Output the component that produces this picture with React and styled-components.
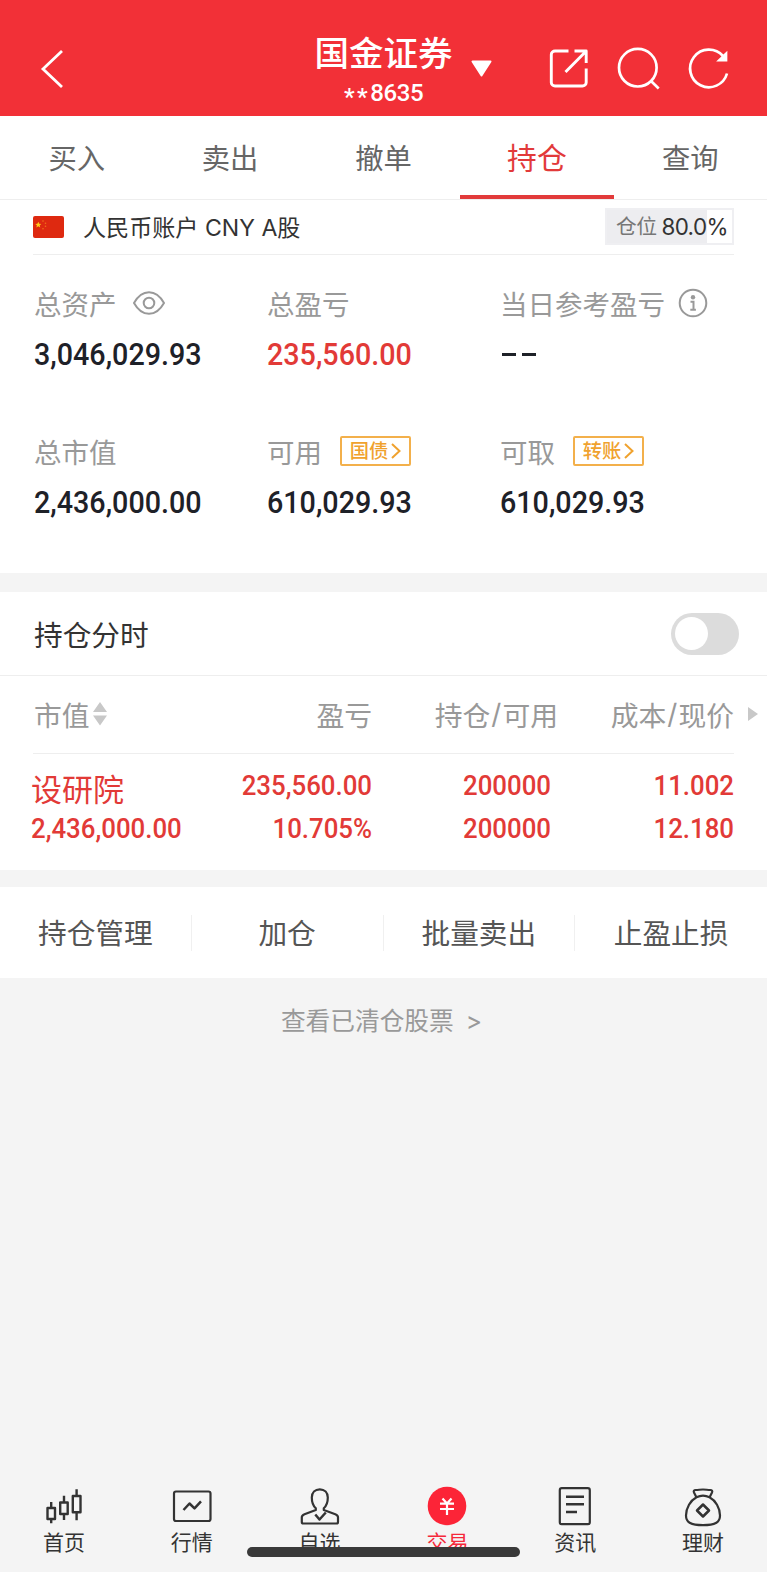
import { useState } from 'react';
import styled, { createGlobalStyle } from 'styled-components';

const GlobalStyle = createGlobalStyle`
  * {
    box-sizing: border-box;
  }
  body {
    margin: 0;
    background: #fff;
    font-family: Inter, 'Noto Sans CJK SC', sans-serif;
    color: #333;
  }
  svg {
    display: block;
    flex: none;
  }
`;

const Container = styled.div`
  position: relative;
  width: 767px;
  height: 1572px;
  display: flex;
  flex-direction: column;
  background: #f4f4f4;
  overflow: hidden;
  white-space: nowrap;
`;

const Header = styled.header`
  height: 116px;
  display: grid;
  grid-template-columns: 1fr auto 1fr;
  background: #f23037;
  color: #fff;
`;

const BackButton = styled.div`
  padding: 48px 0 0 38px;
`;

const TitleWrapper = styled.div`
  padding-top: 33px;
  text-align: center;
`;

const Title = styled.div`
  height: 42px;
  line-height: 42px;
  font-size: 34.5px;
  font-weight: 500;
`;

const AccountNo = styled.div`
  height: 34px;
  line-height: 37px;
  font-family: Roboto, sans-serif;
  font-size: 24px;
  font-weight: 500;
  letter-spacing: -0.4px;
`;

const Stars = styled.span`
  vertical-align: -4px;
  letter-spacing: 2.5px;
`;

const HeaderIcons = styled.div`
  display: flex;
  padding: 45px 0 0 17px;
`;

const IconGroup = styled.div`
  display: flex;
  gap: 22px;
  margin-left: 53px;
`;

const Caret = styled.div`
  margin-top: 15px;
`;

const Tabs = styled.nav`
  height: 84px;
  display: grid;
  grid-template-columns: repeat(5, 1fr);
  background: #fff;
  border-bottom: 1px solid #eee;
`;

const Tab = styled.div`
  height: 83px;
  padding-top: ${({ $active }) => ($active ? 0 : 1)}px;
  text-align: center;
  line-height: 84px;
  font-size: ${({ $active }) => ($active ? 29.8 : 28.3)}px;
  color: ${({ $active }) => ($active ? '#e23a3a' : '#666')};
  border-bottom: ${({ $active }) => ($active ? '4px solid #e23a3a' : 'none')};
`;

const AccountRow = styled.div`
  height: 55px;
  padding: 0 33px;
  background: #fff;
`;

const AccountInner = styled.div`
  height: 55px;
  display: flex;
  align-items: center;
  border-bottom: 1px solid #eee;
`;

const AccountName = styled.div`
  flex: 1;
  margin-left: 19px;
  padding-top: 1px;
  font-size: 23.1px;
  line-height: 32px;
`;

const PositionTag = styled.div`
  width: 129px;
  height: 37px;
  display: flex;
  align-items: center;
  padding-left: 9px;
  gap: 5px;
  margin-top: -1px;
  border: 2px solid #efeff2;
  background: linear-gradient(90deg, #ededf0 80%, #fff 80%);
  font-size: 22.4px;
  letter-spacing: -0.6px;
  line-height: 33px;
`;

const PositionLabel = styled.span`
  font-size: 20.8px;
  color: #777;
`;

const Stats = styled.section`
  height: 318px;
  padding: 29px 0 0 34px;
  display: grid;
  grid-template-columns: 233px 233px 1fr;
  grid-auto-rows: 148px;
  background: #fff;
`;

const StatLabel = styled.div`
  height: 38px;
  display: flex;
  align-items: center;
  gap: ${({ $gap }) => $gap || 16}px;
  font-size: 27.5px;
  color: #999;
`;

const Num = styled.div`
  line-height: ${({ $line }) => $line || 43}px;
  font-family: Roboto, sans-serif;
  font-size: ${({ $size }) => $size || 28}px;
  font-weight: 500;
  color: ${({ $up }) => ($up ? '#e23a37' : '#1e2128')};
  transform: scaleX(${({ $size }) => ($size ? 0.911 : 0.922)});
  transform-origin: ${({ $right }) => ($right ? 'right' : 'left')} center;
`;

const Dashes = styled.div`
  display: flex;
  gap: 6px;
  padding: 31px 0 0 2px;
  &::before,
  &::after {
    content: '';
    width: 14px;
    height: 3px;
    background: #1e2128;
  }
`;

const Tag = styled.span`
  width: 71px;
  height: 30px;
  display: flex;
  align-items: center;
  justify-content: center;
  gap: 3px;
  margin-left: 2px;
  border: 2px solid #f3b04b;
  border-radius: 2px;
  font-size: 19.3px;
  font-weight: 500;
  line-height: 26px;
  color: #f0a22e;
`;

const Band = styled.div`
  height: ${({ $height }) => $height}px;
`;

const SwitchRow = styled.div`
  height: 84px;
  padding: 0 28px 0 34px;
  display: flex;
  align-items: center;
  justify-content: space-between;
  background: #fff;
  border-bottom: 1px solid #eee;
  font-size: 28.7px;
`;

const Switch = styled.button`
  width: 68px;
  height: 42px;
  padding: 4px;
  display: flex;
  justify-content: ${({ $on }) => ($on ? 'flex-end' : 'flex-start')};
  border: none;
  border-radius: 21px;
  background: ${({ $on }) => ($on ? '#e23a3a' : '#dcdcdc')};
`;

const Knob = styled.span`
  width: 33px;
  height: 33px;
  border-radius: 50%;
  background: #fff;
`;

const TableHead = styled.div`
  height: 78px;
  padding-bottom: 2px;
  margin: 0 33px;
  display: grid;
  grid-template-columns: 139px 200px 186px 1fr;
  align-items: center;
  border-bottom: 1px solid #eee;
  font-size: 27.8px;
  color: #999;
`;

const HeadCell = styled.div`
  display: flex;
  align-items: center;
  justify-content: ${({ $left }) => ($left ? 'flex-start' : 'flex-end')};
  gap: ${({ $left }) => ($left ? 3 : 0)}px;
  padding-left: ${({ $left }) => ($left ? 1 : 0)}px;
`;

const Slash = styled.span`
  padding: 0 1px;
`;

// sits in the page gutter, right of the last column
const MoreArrow = styled.span`
  margin: 0 -24px 0 14px;
`;

const Table = styled.section`
  background: #fff;
`;

const Holding = styled.div`
  height: 116px;
  padding: 10px 33px 0 31px;
  display: grid;
  grid-template-columns: 180px 161px 179px 1fr;
`;

const HoldingCell = styled.div`
  text-align: ${({ $left }) => ($left ? 'left' : 'right')};
`;

const StockName = styled.div`
  height: 43px;
  line-height: 52px;
  font-size: 31px;
  color: #e23a37;
`;

const Actions = styled.div`
  height: 91px;
  display: grid;
  grid-template-columns: repeat(4, 1fr);
  align-items: center;
  background: #fff;
`;

const Action = styled.div`
  height: 36px;
  line-height: 38px;
  text-align: center;
  font-size: 28.7px;
  color: #555;
  border-right: 1px solid #f0f0f0;
  &:last-child {
    border-right: none;
  }
`;

const ClearedLink = styled.div`
  flex: 1;
  padding: 26px 4px 0 0;
  display: flex;
  justify-content: center;
  gap: 12px;
  line-height: 34px;
  font-size: 24.7px;
  color: #999;
`;

const BottomNav = styled.nav`
  height: 87px;
  display: grid;
  grid-template-columns: repeat(6, 1fr);
`;

const NavItem = styled.div`
  display: flex;
  flex-direction: column;
  align-items: center;
  line-height: 27px;
  font-size: 21px;
  color: ${({ $active }) => ($active ? '#f5283a' : '#333')};
`;

const HomeIndicator = styled.div`
  position: absolute;
  left: 247px;
  bottom: 15px;
  width: 273px;
  height: 10px;
  border-radius: 5px;
  background: #393939;
`;

const Line = ({ size = 44, width = 2.2, children }) => (
  <svg
    width={size}
    height={size}
    viewBox={`0 0 ${size} ${size}`}
    fill="none"
    stroke="currentColor"
    strokeWidth={width}
    strokeLinejoin="round"
  >
    {children}
  </svg>
);

const Flag = () => (
  <svg width="31" height="22" viewBox="0 0 31 22">
    <rect width="31" height="22" rx="2" fill="#de2910" />
    <path
      d="M5.3 5.8l.9 2 2.1.1-1.6 1.4.5 2.1-1.9-1.200-1.900 1.200.5-2.100-1.600-1.400 2.100-.1z"
      fill="#ffca1a"
    />
    <g fill="#f0701a">
      <circle cx="10" cy="5" r=".8" />
      <circle cx="12.500" cy="7.300" r=".8" />
      <circle cx="12.500" cy="10.300" r=".8" />
      <circle cx="10" cy="12.700" r=".8" />
    </g>
  </svg>
);

const Eye = () => (
  <svg width="32" height="24" viewBox="0 0 32 24" fill="none" stroke="#999" strokeWidth="2">
    <path d="M1 12C5 4.800 10 1.200 16 1.200S27 4.800 31 12C27 19.200 22 22.800 16 22.800S5 19.200 1 12z" />
    <circle cx="16" cy="12" r="5.300" />
  </svg>
);

const Info = () => (
  <svg width="30" height="30" viewBox="0 0 30 30" fill="none" stroke="#999" strokeWidth="2">
    <circle cx="15" cy="15" r="13.300" />
    <circle cx="15" cy="9.300" r="2.200" fill="#999" stroke="none" />
    <path d="M12.500 13.800h3v7.500M12.300 21.700h5.600" />
  </svg>
);

const TagArrow = () => (
  <svg width="10" height="16" viewBox="0 0 10 16" fill="none" stroke="currentColor" strokeWidth="2">
    <path d="M1 1l7.500 7L1 15" />
  </svg>
);

const navList = [
  {
    text: '首页',
    icon: (
      <Line width={2.4}>
        <path d="M5.500 23h7.500v11H5.500zM9.200 17v6M9.200 34v4.300M18.200 17.500h7.500v11.500h-7.500zM22 10.800v6.700M22 29v6M30.800 11h7.700v16.300h-7.700zM34.600 4.300V11M34.600 27.300v8" />
      </Line>
    ),
  },
  {
    text: '行情',
    icon: (
      <Line>
        <rect x="4" y="6.500" width="36.500" height="29.500" rx="2" />
        <path d="M13.500 25l6-6.500 5 4.800 6.500-7" strokeWidth="2.500" />
      </Line>
    ),
  },
  {
    text: '自选',
    icon: (
      <Line>
        <path d="M17.800 23.300C14.800 20.500 13.800 17 13.800 12.500c0-5 3.300-8.200 8-8.200s8 3.200 8 8.200c0 4.500-1 8-4 10.800v1.700l11.500 4.200c1.800.7 2.700 1.300 2.700 3v4.800c0 1-.5 1.500-1.500 1.500h-33.200c-1 0-1.500-.5-1.500-1.500v-4.800c0-1.700.9-2.300 2.700-3l11.300-4.200z" />
        <path d="M17.300 29.500l4.200 5 6.300-7" strokeWidth="2.500" />
      </Line>
    ),
  },
  {
    text: '交易',
    active: true,
    icon: (
      <Line>
        <circle cx="22" cy="21" r="19.300" fill="#fc2437" stroke="none" />
        <path d="M17.500 13.500l4.500 5 4.500-5M22 18.500v11.500M15 18.700h14M15 24h14" stroke="#fff" />
      </Line>
    ),
  },
  {
    text: '资讯',
    icon: (
      <Line>
        <rect x="6.800" y="3.200" width="30" height="36" rx="2" />
        <path d="M13 11.700h18M13 19.300h18M13 27h11" strokeWidth="2.500" />
      </Line>
    ),
  },
  {
    text: '理财',
    icon: (
      <Line>
        <path d="M15.500 12.500L13 7.500c-.8-1.700.2-2.500 1.700-2.500 2.500 0 4.800-.5 7.300-.5s4.800.5 7.300.5c1.500 0 2.500.8 1.700 2.500l-2.500 5" />
        <path d="M15.500 12.300c4-2 9-2 13 0C34.500 15.500 39 23 39 30.500c0 6.500-4 9.700-17 9.700S5 37 5 30.500C5 23 9.500 15.500 15.500 12.300z" />
        <path d="M22 19.500l6 6-6 6-6-6z" strokeWidth="2.500" />
      </Line>
    ),
  },
];

const tabList = ['买入', '卖出', '撤单', '持仓', '查询'];
const actionList = ['持仓管理', '加仓', '批量卖出', '止盈止损'];

const App = () => {
  const [tab, setTab] = useState('持仓');
  const [on, setOn] = useState(false);

  return (
    <Container>
      <GlobalStyle />
      <Header>
        <BackButton>
          <svg width="28" height="42" fill="none" stroke="#fff" strokeWidth="2.800">
            <path d="M24 3L5 21l19 18" />
          </svg>
        </BackButton>
        <TitleWrapper>
          <Title>国金证券</Title>
          <AccountNo>
            <Stars>**</Stars>8635
          </AccountNo>
        </TitleWrapper>
        <HeaderIcons>
          <Caret>
            <svg width="23" height="18">
              <path
                d="M2.500 1.500h18L11.500 15.500z"
                fill="#fff"
                stroke="#fff"
                strokeWidth="2"
                strokeLinejoin="round"
              />
            </svg>
          </Caret>
          <IconGroup>
            <Line size={48} width={2.9}>
              <path d="M22.500 6H9c-2 0-3.700 1.500-3.700 3.500v28c0 2 1.700 3.500 3.700 3.500H36.500c2 0 3.700-1.500 3.700-3.500V23.500M28.500 6h11.700v12M40 6.200L19.500 27" />
            </Line>
            <Line size={48} width={2.7}>
              <circle cx="21.800" cy="22.700" r="18.800" />
              <path d="M35 36l7.700 7.500" />
            </Line>
            <Line size={48} width={2.7}>
              <path d="M41 28.500A18.800 18.800 0 1 1 37 11" />
              <path d="M40 9v6.200h-6.500z" fill="#fff" strokeLinejoin="miter" />
            </Line>
          </IconGroup>
        </HeaderIcons>
      </Header>

      <Tabs>
        {tabList.map((it) => (
          <Tab key={it} $active={it === tab} onClick={() => setTab(it)}>
            {it}
          </Tab>
        ))}
      </Tabs>

      <AccountRow>
        <AccountInner>
          <Flag />
          <AccountName>人民币账户 CNY A股</AccountName>
          <PositionTag>
            <PositionLabel>仓位</PositionLabel>80.0%
          </PositionTag>
        </AccountInner>
      </AccountRow>

      <Stats>
        <div>
          <StatLabel>
            总资产 <Eye />
          </StatLabel>
          <Num $size={31.5} $line={65}>3,046,029.93</Num>
        </div>
        <div>
          <StatLabel>总盈亏</StatLabel>
          <Num $size={31.5} $line={65} $up>235,560.00</Num>
        </div>
        <div>
          <StatLabel $gap={13}>
            当日参考盈亏 <Info />
          </StatLabel>
          <Dashes />
        </div>
        <div>
          <StatLabel>总市值</StatLabel>
          <Num $size={31.5} $line={65}>2,436,000.00</Num>
        </div>
        <div>
          <StatLabel>
            可用
            <Tag>
              国债 <TagArrow />
            </Tag>
          </StatLabel>
          <Num $size={31.5} $line={65}>610,029.93</Num>
        </div>
        <div>
          <StatLabel>
            可取
            <Tag>
              转账 <TagArrow />
            </Tag>
          </StatLabel>
          <Num $size={31.5} $line={65}>610,029.93</Num>
        </div>
      </Stats>

      <Band $height={19} />

      <SwitchRow>
        持仓分时
        <Switch $on={on} onClick={() => setOn(!on)}>
          <Knob />
        </Switch>
      </SwitchRow>

      <Table>
        <TableHead>
          <HeadCell $left>
            市值
            <svg width="14" height="24" fill="#c8c8c8">
              <path d="M7 0l7 10H0zM7 23.500L0 13.500h14z" />
            </svg>
          </HeadCell>
          <HeadCell>盈亏</HeadCell>
          <HeadCell>
            持仓<Slash>/</Slash>可用
          </HeadCell>
          <HeadCell>
            成本<Slash>/</Slash>现价
            <MoreArrow>
              <svg width="10" height="14" fill="#c8c8c8">
                <path d="M0 0l10 7-10 7z" />
              </svg>
            </MoreArrow>
          </HeadCell>
        </TableHead>
        <Holding>
          <HoldingCell $left>
            <StockName>设研院</StockName>
            <Num $up>2,436,000.00</Num>
          </HoldingCell>
          <HoldingCell>
            <Num $up $right>235,560.00</Num>
            <Num $up $right>10.705%</Num>
          </HoldingCell>
          <HoldingCell>
            <Num $up $right>200000</Num>
            <Num $up $right>200000</Num>
          </HoldingCell>
          <HoldingCell>
            <Num $up $right>11.002</Num>
            <Num $up $right>12.180</Num>
          </HoldingCell>
        </Holding>
      </Table>

      <Band $height={17} />

      <Actions>
        {actionList.map((it) => (
          <Action key={it}>{it}</Action>
        ))}
      </Actions>

      <ClearedLink>
        查看已清仓股票 <span>&gt;</span>
      </ClearedLink>

      <BottomNav>
        {navList.map((it) => (
          <NavItem key={it.text} $active={it.active}>
            {it.icon}
            {it.text}
          </NavItem>
        ))}
      </BottomNav>
      <HomeIndicator />
    </Container>
  );
};

export default App;
